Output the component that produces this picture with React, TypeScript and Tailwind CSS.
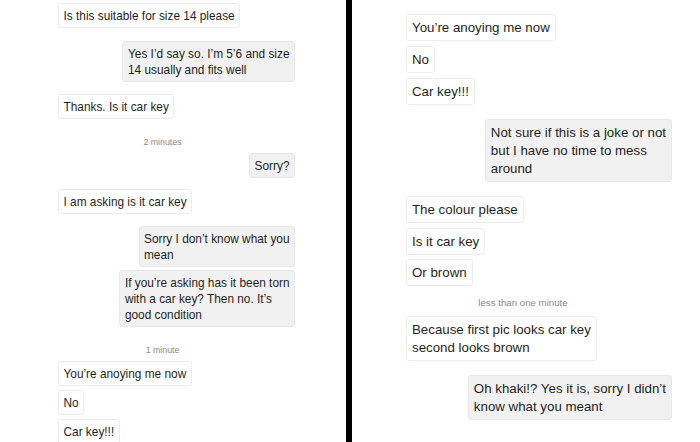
import React from "react";

type Item =
  | { kind: "msg"; side: "in" | "out"; lines: string[]; mt: string }
  | { kind: "time"; text: string; mt: string };

const left: Item[] = [
  { kind: "msg", side: "in", lines: ["Is this suitable for size 14 please"], mt: "mt-[3px]" },
  { kind: "msg", side: "out", lines: ["Yes I’d say so. I’m 5’6 and size", "14 usually and fits well"], mt: "mt-[13px]" },
  { kind: "msg", side: "in", lines: ["Thanks. Is it car key"], mt: "mt-[12px]" },
  { kind: "time", text: "2 minutes", mt: "mt-[17px]" },
  { kind: "msg", side: "out", lines: ["Sorry?"], mt: "mt-[5px]" },
  { kind: "msg", side: "in", lines: ["I am asking is it car key"], mt: "mt-[11px]" },
  { kind: "msg", side: "out", lines: ["Sorry I don’t know what you", "mean"], mt: "mt-[12px]" },
  { kind: "msg", side: "out", lines: ["If you’re asking has it been torn", "with a car key? Then no. It’s", "good condition"], mt: "mt-[3px]" },
  { kind: "time", text: "1 minute", mt: "mt-[17px]" },
  { kind: "msg", side: "in", lines: ["You’re anoying me now"], mt: "mt-[5px]" },
  { kind: "msg", side: "in", lines: ["No"], mt: "mt-[4px]" },
  { kind: "msg", side: "in", lines: ["Car key!!!"], mt: "mt-[4px]" },
];

const right: Item[] = [
  { kind: "msg", side: "in", lines: ["You’re anoying me now"], mt: "mt-[14px]" },
  { kind: "msg", side: "in", lines: ["No"], mt: "mt-[5px]" },
  { kind: "msg", side: "in", lines: ["Car key!!!"], mt: "mt-[5px]" },
  { kind: "msg", side: "out", lines: ["Not sure if this is a joke or not", "but I have no time to mess", "around"], mt: "mt-[14px]" },
  { kind: "msg", side: "in", lines: ["The colour please"], mt: "mt-[14px]" },
  { kind: "msg", side: "in", lines: ["Is it car key"], mt: "mt-[5px]" },
  { kind: "msg", side: "in", lines: ["Or brown"], mt: "mt-[4px]" },
  { kind: "time", text: "less than one minute", mt: "mt-[11px]" },
  { kind: "msg", side: "in", lines: ["Because first pic looks car key", "second looks brown"], mt: "mt-[7px]" },
  { kind: "msg", side: "out", lines: ["Oh khaki!? Yes it is, sorry I didn’t", "know what you meant"], mt: "mt-[14px]" },
];

function Bubble({ side, lines, mt, big }: { side: "in" | "out"; lines: string[]; mt: string; big: boolean }) {
  return (
    <div className={`flex ${side === "out" ? "justify-end" : "justify-start"} ${mt}`}>
      <div
        className={`whitespace-nowrap rounded-[3px] border ${
          side === "out" ? "bg-[#f1f1f1] border-[#e8e8e8]" : "bg-white border-[#ececec]"
        } ${big ? "px-[5px] py-[3.5px] text-[13.3px] leading-[18px]" : "px-[4.5px] py-[3.5px] text-[11.85px] leading-[16px]"} text-[#1f1f1f]`}
      >
        {lines.map((l, i) => (
          <div key={i}>{l}</div>
        ))}
      </div>
    </div>
  );
}

function Thread({ items, big }: { items: Item[]; big: boolean }) {
  return (
    <>
      {items.map((it, i) =>
        it.kind === "msg" ? (
          <Bubble key={i} side={it.side} lines={it.lines} mt={it.mt} big={big} />
        ) : (
          <div
            key={i}
            className={`${it.mt} h-[12px] leading-[12px] text-center text-[#8a8a8a] ${
              big ? "pr-[32px] text-[9.7px]" : "pr-[28px] text-[8.8px]"
            }`}
          >
            {it.text}
          </div>
        )
      )}
    </>
  );
}

export default function App() {
  return (
    <div
      className="flex w-[700px] h-[442px] overflow-hidden bg-white"
      style={{ fontFamily: "'Liberation Sans', Arial, sans-serif" }}
    >
      <div className="w-[346px] shrink-0 pl-[58px] pr-[51px] flex flex-col">
        <Thread items={left} big={false} />
      </div>
      <div className="w-[6px] shrink-0 bg-black" />
      <div className="flex-1 pl-[54px] pr-[28px] flex flex-col">
        <Thread items={right} big={true} />
      </div>
    </div>
  );
}
